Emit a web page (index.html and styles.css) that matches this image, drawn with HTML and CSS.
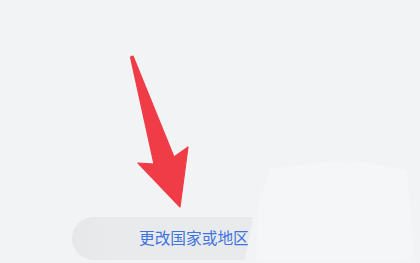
FILE: index.html
```html
<!DOCTYPE html>
<html lang="zh">
<head>
<meta charset="utf-8">
<link rel="stylesheet" href="styles.css">
</head>
<body>
<main class="screen">
  <div class="glare"></div>
  <div class="bar"><span class="label">更改国家或地区</span></div>
  <svg class="arrow" width="420" height="263" viewBox="0 0 420 263">
    <polygon points="130.5,57 133,56 174,157 188,147 180,207 138,163 154,164" fill="#ef3c47" stroke="#ef3c47" stroke-width="1.2" stroke-linejoin="round"/>
  </svg>
</main>
</body>
</html>
```
FILE: styles.css
```css
html, body {
  margin: 0;
  padding: 0;
  background: #f2f3f5;
}
.screen {
  position: relative;
  width: 420px;
  height: 263px;
  box-sizing: border-box;
  padding: 217px 0 0 72px;
  overflow: hidden;
  font-family: "Noto Sans CJK SC", "Noto Sans", sans-serif;
}
.bar {
  width: 181px;
  height: 43px;
  box-sizing: border-box;
  padding-left: 67px;
  display: flex;
  align-items: center;
  background: linear-gradient(90deg, #e6e7e9 0%, #e9eaec 20%, #e9eaec 100%);
  border-radius: 22px 0 0 22px;
  clip-path: polygon(0 0, 100% 0, calc(100% - 8px) 100%, 0 100%);
}
.label {
  font-size: 15.7px;
  line-height: 1;
  color: #3e74df;
  white-space: nowrap;
  margin-top: -2px;
}
.glare {
  position: absolute;
  left: 255px;
  top: 160px;
  width: 160px;
  height: 103px;
  background: #f5f6f7;
  clip-path: polygon(10% 8%, 60% 0, 95% 10%, 100% 100%, 0 100%, 2% 40%);
  filter: blur(4px);
}
.arrow {
  position: absolute;
  left: 0;
  top: 0;
}
```
